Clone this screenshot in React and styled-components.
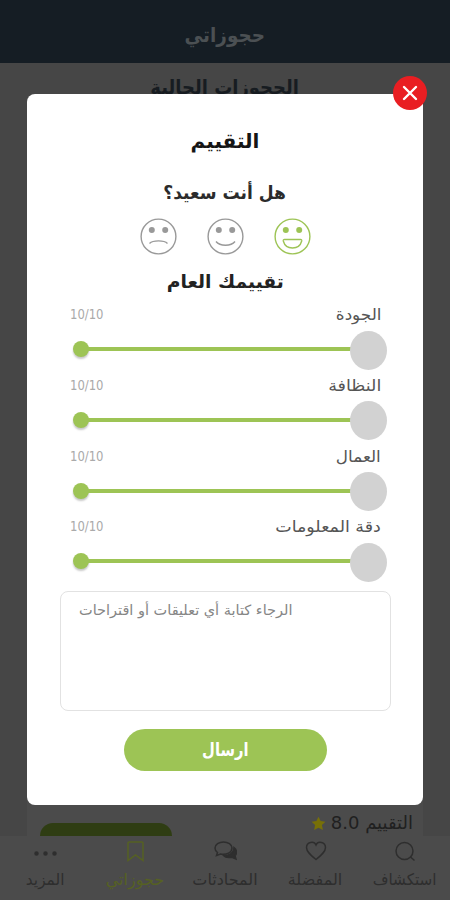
import React from "react";
import styled, { createGlobalStyle } from "styled-components";

const GlobalStyle = createGlobalStyle`
  * {
    box-sizing: border-box;
  }
  body {
    margin: 0;
    font-family: "DejaVu Sans", sans-serif;
  }
`;

const colors = {
  green: "#9dc455",
  greenDim: "#566123",
  greenDark: "#2f3d13",
  header: "#151d24",
  page: "#464646",
  card: "#4b4b4b",
  dimText: "#2e2e2e",
};

const Screen = styled.div`
  position: relative;
  display: flex;
  flex-direction: column;
  width: 450px;
  height: 900px;
  overflow: hidden;
  background: ${colors.page};
`;

// `sx` narrows or widens the glyphs without breaking the joined letters
const Text = styled.span`
  display: block;
  white-space: nowrap;
  line-height: 24px;
  font-size: ${(props) => props.$size}px;
  font-weight: ${(props) => (props.$bold ? 700 : 400)};
  color: ${(props) => props.$color};
  transform: scaleX(${(props) => props.$sx || 1});
  transform-origin: ${(props) => props.$origin || "center"};
`;

const Header = styled.header`
  display: flex;
  justify-content: center;
  height: 63px;
  padding-top: 23px;
  background: ${colors.header};
`;

const Page = styled.main`
  display: flex;
  flex: 1;
  flex-direction: column;
  align-items: center;
  padding: 12px 27px 0;
`;

const BookingCard = styled.div`
  display: flex;
  justify-content: space-between;
  align-items: flex-start;
  width: 100%;
  height: 36px;
  margin-top: auto;
  padding: 0 10px 0 13px;
  background: ${colors.card};
`;

const CardButton = styled.div`
  width: 132px;
  height: 13px;
  margin-top: 23px;
  border-radius: 20px 20px 0 0;
  background: ${colors.greenDark};
`;

const Score = styled.div`
  display: flex;
  align-items: center;
  gap: 5px;
  margin-top: 11px;
`;

const TabBar = styled.nav`
  display: flex;
  height: 64px;
  background: ${colors.card};
`;

const Tab = styled.div`
  display: flex;
  flex-direction: column;
  align-items: center;
  width: 90px;
  padding-top: 3px;
  color: ${(props) => (props.$active ? colors.greenDim : colors.dimText)};
`;

const Modal = styled.section`
  position: absolute;
  top: 94px;
  left: 27px;
  display: flex;
  flex-direction: column;
  align-items: center;
  width: 396px;
  height: 711px;
  padding: 35px 33px 0;
  border-radius: 8px;
  background: #fff;
`;

const CloseButton = styled.button`
  position: absolute;
  top: -18px;
  right: -4px;
  display: flex;
  align-items: center;
  justify-content: center;
  width: 34px;
  height: 34px;
  padding: 0;
  border: 0;
  border-radius: 50%;
  background: #e91e22;
`;

const Heading = styled.div`
  margin-top: ${(props) => props.$gap || 0}px;
`;

const Faces = styled.div`
  display: flex;
  gap: 30px;
  margin-top: 13px;
`;

const FaceIcon = styled.svg`
  width: 37px;
  height: 37px;
  fill: none;
  stroke: ${(props) => (props.$active ? colors.green : "#999")};
  stroke-width: 1.4;
`;

const Ratings = styled.div`
  width: 100%;
  margin-top: 9px;
`;

const Rating = styled.div`
  height: 70.8px;
  padding: 0 3px 0 10px;
`;

const RatingTop = styled.div`
  display: flex;
  justify-content: space-between;
  height: 28px;
  padding-right: 6px;
`;

const RatingValue = styled(Text)`
  margin-top: -1px;
`;

const Slider = styled.div`
  display: flex;
  align-items: center;
  height: 38px;
  padding-left: 3px;
`;

const StartDot = styled.span`
  width: 16px;
  height: 16px;
  margin-top: -2px;
  border-radius: 50%;
  background: ${colors.green};
  box-shadow: 0 2px 2px rgba(0, 0, 0, 0.22);
`;

const Track = styled.span`
  flex: 1;
  height: 4px;
  margin: -2px -2px 0 -1px;
  background: ${colors.green};
`;

const Thumb = styled.span`
  z-index: 1;
  width: 37px;
  height: 39px;
  border-radius: 50%;
  background: #d2d2d2;
`;

const Comment = styled.div`
  flex-shrink: 0;
  display: flex;
  width: 331px;
  height: 120px;
  margin-top: 5px;
  padding: 6px 18px;
  border: 1px solid #e2e2e2;
  border-radius: 8px;
`;

const Submit = styled.button`
  flex-shrink: 0;
  display: flex;
  align-items: center;
  justify-content: center;
  width: 203px;
  height: 42px;
  margin-top: 18px;
  padding: 0;
  border: 0;
  border-radius: 21px;
  font-family: inherit;
  background: ${colors.green};
`;

const Icon = styled.svg`
  width: 24px;
  height: 24px;
  margin-bottom: 5px;
  fill: none;
  stroke: currentColor;
  stroke-width: 1.5;
`;

const mouths = {
  sad: <path d="M9.5 25.5C13 22 24 22 27.5 25.5" />,
  smile: <path d="M9 23.5C13 28.5 24 28.5 28 23.5" />,
  laugh: <path d="M10.5 21.5H26.5q1.5 0 1.200 1.500C26.500 27.500 23 30 18.500 30S10.500 27.500 9.300 23q-.3-1.500 1.200-1.500Z" />,
};

const Face = ({ mood, active }) => (
  <FaceIcon viewBox="0 0 37 37" $active={active}>
    <circle cx="18.5" cy="18.5" r="17.4" />
    <circle cx="11.8" cy="12" r="3" fill={active ? colors.green : "#999"} stroke="none" />
    <circle cx="25.2" cy="12" r="3" fill={active ? colors.green : "#999"} stroke="none" />
    {mouths[mood]}
  </FaceIcon>
);

const tabs = [
  {
    label: "المزيد",
    sx: 0.96,
    icon: <path d="M3.5 14.5h.01M12.5 14.5h.01M21.5 14.5h.01" strokeWidth="4.5" strokeLinecap="round" />,
  },
  { label: "حجوزاتي", sx: 1, active: true, icon: <path d="M5 4q0-1 1-1h13q1 0 1 1v17.500L12.500 16 5 21.500Z" /> },
  {
    label: "المحادثات",
    sx: 1,
    icon: (
      <>
        <path d="M10.5 3C6 3 2 5.500 2 9c0 2 1 3.500 2.500 4.500L3.500 16.500l4-1.500c6 1 11.500-1.500 11.500-6C19 5.500 15 3 10.500 3Z" />
        <path d="M21 8.500c3.500 2.500 3 6.500 1 8.200l1 3.300-4-1.800c-3.500.8-7 .1-8.500-1.700 5 .5 10.500-2.500 10.500-8Z" fill="currentColor" />
      </>
    ),
  },
  {
    label: "المفضلة",
    sx: 1,
    icon: (
      <path d="M13 20.500C8 16.500 3.500 13 3.500 8.500c0-5.500 7.500-7 9.500-2.500 2-4.500 9.500-3 9.500 2.500 0 4.500-4.500 8-9.500 12Z" />
    ),
  },
  {
    label: "استكشاف",
    sx: 0.95,
    icon: (
      <>
        <circle cx="11.5" cy="12" r="8.5" />
        <path d="M17.5 18l4 3.500" />
      </>
    ),
  },
];

const ratings = [
  { label: "الجودة", sx: 1.05 },
  { label: "النظافة", sx: 1.1 },
  { label: "العمال", sx: 1.05 },
  { label: "دقة المعلومات", sx: 1.09 },
];

const App = () => (
  <>
    <GlobalStyle />
    <Screen>
      <Header>
        <Text $size={20} $sx={0.92} $bold $color="#4b5053">حجوزاتي</Text>
      </Header>
      <Page>
        <Text $size={20} $sx={0.9} $bold $color="#171c21">الحجوزات الحالية</Text>
        <BookingCard>
          <CardButton />
          <Score>
            <svg width="15" height="15" viewBox="0 0 24 24" fill="#777008">
              <path d="M12 1l3.400 7 7.600 1-5.500 5.500L19 22.500 12 18.700 5 22.500l1.500-8L1 9l7.600-1Z" />
            </svg>
            <Text $size={18} $color="#202020" dir="rtl">التقييم 8.0</Text>
          </Score>
        </BookingCard>
      </Page>
      <TabBar>
        {tabs.map(({ label, sx, active, icon }) => (
          <Tab key={label} $active={active}>
            <Icon viewBox="0 0 24 24">{icon}</Icon>
            <Text $size={16} $sx={sx} $color="inherit">{label}</Text>
          </Tab>
        ))}
      </TabBar>

      <Modal>
        <CloseButton aria-label="إغلاق">
          <svg width="16" height="16" viewBox="0 0 16 16" stroke="#fff" strokeWidth="2.4" strokeLinecap="round">
            <path d="M2 2l12 12M14 2L2 14" />
          </svg>
        </CloseButton>
        <Heading>
          <Text $size={20} $bold $color="#151515">التقييم</Text>
        </Heading>
        <Heading $gap={28}>
          <Text $size={18} $sx={0.95} $bold $color="#2b2b2b" dir="rtl">هل أنت سعيد؟</Text>
        </Heading>
        <Faces>
          <Face mood="sad" />
          <Face mood="smile" />
          <Face mood="laugh" active />
        </Faces>
        <Heading $gap={15}>
          <Text $size={18} $sx={1.04} $bold $color="#222">تقييمك العام</Text>
        </Heading>
        <Ratings>
          {ratings.map(({ label, sx }) => (
            <Rating key={label}>
              <RatingTop>
                <RatingValue $size={14} $sx={0.83} $color="#aaa" $origin="left">10/10</RatingValue>
                <Text $size={16} $sx={sx} $color="#555" $origin="right">{label}</Text>
              </RatingTop>
              <Slider>
                <StartDot />
                <Track />
                <Thumb />
              </Slider>
            </Rating>
          ))}
        </Ratings>
        <Comment>
          <Text $size={14} $sx={1.035} $color="#858585" $origin="left">الرجاء كتابة أي تعليقات أو اقتراحات</Text>
        </Comment>
        <Submit>
          <Text $size={18} $sx={0.82} $bold $color="#fff">ارسال</Text>
        </Submit>
      </Modal>
    </Screen>
  </>
);

export default App;
